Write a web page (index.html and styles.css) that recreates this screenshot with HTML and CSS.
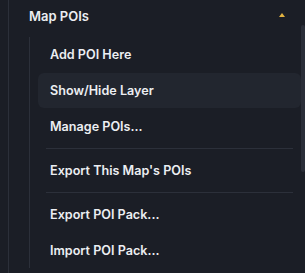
FILE: index.html
```html
<html>
<head>
<link rel="stylesheet" href="styles.css">
</head>
<body>
<div class="panel">
  <div class="rail">
    <div class="section">
      <div class="section-head">
        <span>Map POIs</span>
        <span class="caret"></span>
      </div>
      <div class="submenu">
        <div class="item">Add POI Here</div>
        <div class="item hover">Show/Hide Layer</div>
        <div class="item">Manage POIs...</div>
        <div class="sep"></div>
        <div class="item">Export This Map's POIs</div>
        <div class="sep"></div>
        <div class="item">Export POI Pack...</div>
        <div class="item">Import POI Pack...</div>
      </div>
    </div>
  </div>
  <div class="scroll-thumb"></div>
</div>
</body>
</html>
```

FILE: styles.css
```css
body {
	margin: 0;
	background-color: #1b1e26;
	font-family: Inter, "Noto Sans", sans-serif;
	font-size: 12.6px;
	font-weight: 600;
	color: #eceef2;
	overflow: hidden;
}

.panel {
	position: relative;
	height: 273px;
}

.rail {
	margin-left: 8px;
	border-left: 1px solid #2c303a;
	height: 273px;
}

.section-head {
	display: flex;
	align-items: center;
	justify-content: space-between;
	height: 32px;
	padding-left: 20px;
	padding-right: 20px;
	font-size: 13px;
}

.caret {
	width: 0;
	height: 0;
	border-left: 3.5px solid transparent;
	border-right: 3.5px solid transparent;
	border-bottom: 4px solid #e3b341;
	margin-top: -2px;
}

.submenu {
	margin-left: 20px;
	margin-top: 5px;
	border-left: 1px solid #2c303a;
	height: 231px;
	padding-left: 8px;
	padding-right: 4px;
}

.item {
	height: 36px;
	line-height: 36px;
	padding-left: 12px;
	border-radius: 6px;
}

.item.hover {
	background-color: #22262f;
	height: 35px;
	line-height: 35px;
	margin-bottom: 1px;
}

.sep {
	height: 1px;
	background-color: #2c303a;
	margin: 3px 8px 4px 8px;
}

.scroll-thumb {
	position: absolute;
	right: 0;
	top: 25px;
	width: 4px;
	height: 147px;
	border-radius: 2px;
	background-color: #2a2e38;
}
```
